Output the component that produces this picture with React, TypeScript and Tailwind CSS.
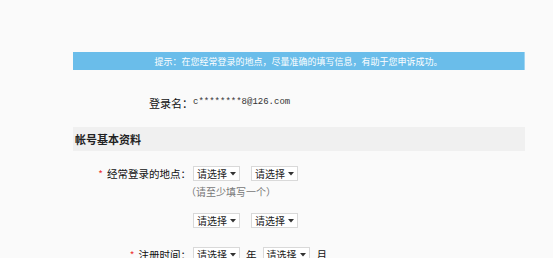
import React from "react";

function Sel() {
  return (
    <div className="flex h-[15px] w-[47px] shrink-0 items-center border border-[#d9d9d9] bg-white pl-[3px] text-[10px] leading-none text-[#222]">
      <span className="w-[33px]">请选择</span>
      <svg width="6" height="4" viewBox="0 0 6 4">
        <path d="M0 0 L6 0 L3 3.5 Z" fill="#333" />
      </svg>
    </div>
  );
}

function Label({ text, star }: { text: string; star?: boolean }) {
  return (
    <div className="flex w-[120px] shrink-0 items-center justify-end pr-[2px] text-[10.5px] text-[#111]">
      {star && <span className="mr-[4px] text-[10px] text-[#e33]">*</span>}
      <span>{text}</span>
    </div>
  );
}

export default function App() {
  return (
    <div
      className="h-[258px] w-[553px] overflow-hidden bg-[#fafafa]"
      style={{ fontFamily: '"Noto Sans CJK SC", "Liberation Sans", sans-serif' }}
    >
      <div className="ml-[73px] w-[452px] pt-[52px]">
        <div className="flex h-[18px] items-center justify-center border-r border-[#9fd4f2] bg-[#6abdea] text-[9px] leading-none text-white">
          提示：在您经常登录的地点，尽量准确的填写信息，有助于您申诉成功。
        </div>

        <div className="mt-[25px] flex h-[16px] items-center">
          <div className="flex w-[120px] justify-end text-[11px] text-[#111]">登录名：</div>
          <span className="text-[9px] text-[#333]" style={{ fontFamily: '"Liberation Mono", monospace' }}>
            c********8@126.com
          </span>
        </div>

        <div className="mt-[16px] flex h-[24px] items-center bg-[#f0f0f0] pl-[2px] text-[11px] font-bold text-[#222]">
          帐号基本资料
        </div>

        <div className="mt-[15px] flex h-[15px] items-center">
          <Label text="经常登录的地点：" star />
          <Sel />
          <div className="w-[11px]" />
          <Sel />
        </div>

        <div className="mt-[4px] flex h-[12px] items-center pl-[113px] text-[10px] text-[#777]">
          （请至少填写一个）
        </div>

        <div className="mt-[16px] flex h-[15px] items-center">
          <div className="w-[120px] shrink-0" />
          <Sel />
          <div className="w-[11px]" />
          <Sel />
        </div>

        <div className="mt-[19px] flex h-[15px] items-center">
          <Label text="注册时间：" star />
          <Sel />
          <span className="mx-[6px] text-[10.5px] text-[#111]">年</span>
          <Sel />
          <span className="ml-[7px] text-[10.5px] text-[#111]">月</span>
        </div>
      </div>
    </div>
  );
}
